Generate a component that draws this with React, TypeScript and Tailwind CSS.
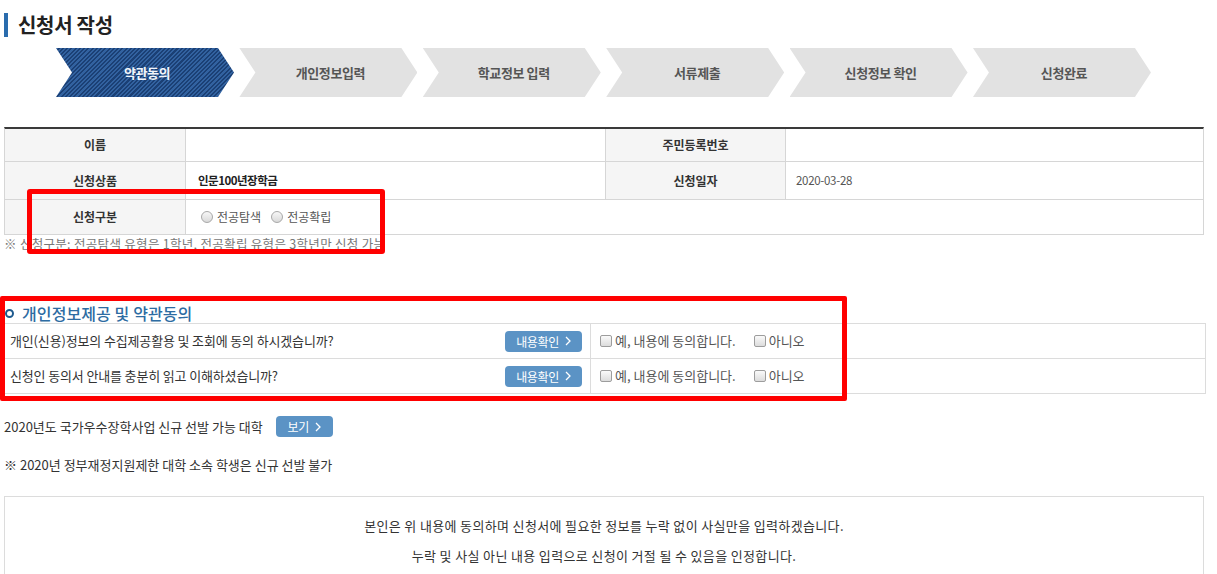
import React from "react";

const steps = ["약관동의", "개인정보입력", "학교정보 입력", "서류제출", "신청정보 확인", "신청완료"];

function Chevron() {
  return (
    <svg width="6" height="10" viewBox="0 0 6 10" className="ml-[6px]">
      <polyline points="1,1 5,5 1,9" fill="none" stroke="#ffffff" strokeWidth="1.3" />
    </svg>
  );
}

function Radio({ label }: { label: string }) {
  return (
    <span className="flex items-center mr-[10px]">
      <span className="w-[12px] h-[12px] rounded-full border border-[#a8a8a8] [background:linear-gradient(#f7f7f7,#d9d9d9)] mr-[4px]" />
      <span className="text-[12px] text-[#555] leading-[16px]">{label}</span>
    </span>
  );
}

function Check({ label, className = "" }: { label: string; className?: string }) {
  return (
    <span className={"flex items-center " + className}>
      <span className="w-[12px] h-[12px] rounded-[2px] border border-[#9d9d9d] [background:linear-gradient(#fafafa,#dcdcdc)] mr-[3px]" />
      <span className="text-[13px] text-[#555] leading-[16px]">{label}</span>
    </span>
  );
}

function BlueButton({ label, w }: { label: string; w: string }) {
  return (
    <span className={"h-[21px] rounded-[4px] bg-[#5b93c5] text-white text-[12px] tracking-[-0.4px] leading-[21px] flex items-center justify-center " + w}>
      {label}
      <Chevron />
    </span>
  );
}

export default function App() {
  const cellB = "border-[#d6d6d6]";
  return (
    <div className="relative w-[1217px] min-h-[574px] bg-white text-[#333] font-['Noto_Sans_CJK_KR','Noto_Sans',sans-serif] overflow-hidden">
      {/* Title */}
      <div className="flex items-center pt-[13px] pl-[4px]">
        <span className="w-[4px] h-[24px] bg-[#2a6cad]" />
        <h1 className="ml-[10px] text-[20px] font-bold leading-[24px] text-[#222] tracking-[-0.3px]">신청서 작성</h1>
      </div>

      {/* Steps */}
      <div className="flex gap-[5.4px] ml-[56px] mt-[11px]">
        {steps.map((s, i) => (
          <div
            key={s}
            className={
              "w-[178px] h-[49px] flex items-center justify-center pl-[4px] text-[13px] font-bold tracking-[-0.4px] [clip-path:polygon(0_0,162px_0,178px_50%,162px_100%,0_100%,16px_50%)] " +
              (i === 0
                ? "text-[#f2f5fa] [background:repeating-linear-gradient(135deg,#3262a0_0px,#3262a0_1.5px,#1b4075_1.5px,#1b4075_3px)]"
                : "bg-[#e2e2e2] text-[#555]")
            }
          >
            {s}
          </div>
        ))}
      </div>

      {/* Info table */}
      <div className={"ml-[4px] mt-[30px] w-[1200px] border-t-2 border-t-[#3a3a3a] border-x " + cellB}>
        <div className={"flex h-[33px] border-b " + cellB}>
          <div className={"w-[181px] bg-[#f5f5f5] border-r flex items-center justify-center text-[12px] font-bold " + cellB}>이름</div>
          <div className={"w-[420px] border-r " + cellB} />
          <div className={"w-[180px] bg-[#f5f5f5] border-r flex items-center justify-center text-[12px] font-bold " + cellB}>주민등록번호</div>
          <div className="flex-1" />
        </div>
        <div className={"flex h-[38px] border-b " + cellB}>
          <div className={"w-[181px] bg-[#f5f5f5] border-r flex items-center justify-center text-[12px] font-bold " + cellB}>신청상품</div>
          <div className={"w-[420px] border-r flex items-center pl-[12px] text-[11.5px] font-bold text-[#222] tracking-[-0.5px] " + cellB}>인문100년장학금</div>
          <div className={"w-[180px] bg-[#f5f5f5] border-r flex items-center justify-center text-[12px] font-bold " + cellB}>신청일자</div>
          <div className="flex-1 flex items-center pl-[10px] text-[11.5px] text-[#555] tracking-[-0.3px]">2020-03-28</div>
        </div>
        <div className={"flex h-[35px] border-b " + cellB}>
          <div className={"w-[181px] bg-[#f5f5f5] border-r flex items-center justify-center text-[12px] font-bold " + cellB}>신청구분</div>
          <div className="flex-1 flex items-center pl-[15px]">
            <Radio label="전공탐색" />
            <Radio label="전공확립" />
          </div>
        </div>
      </div>
      <p className="ml-[4px] mt-[1px] text-[12.5px] tracking-[0.3px] leading-[16px] text-[#777]">※ 신청구분: 전공탐색 유형은 1학년, 전공확립 유형은 3학년만 신청 가능</p>

      {/* Agreement section */}
      <div className="mt-[51px] ml-[5px] flex items-center h-[20px]">
        <span className="w-[9px] h-[9px] rounded-full border-[2.5px] border-[#1e5a8e]" />
        <h2 className="ml-[8px] text-[16px] font-medium leading-[20px] text-[#2d6ca2] tracking-[0.1px]">개인정보제공 및 약관동의</h2>
      </div>
      <div className="ml-[4px] w-[1202px] border-t border-r border-[#dcdcdc]">
        {["개인(신용)정보의 수집제공활용 및 조회에 동의 하시겠습니까?", "신청인 동의서 안내를 충분히 읽고 이해하셨습니까?"].map((q) => (
          <div key={q} className="flex h-[35px] border-b border-[#dcdcdc]">
            <div className="w-[587px] flex items-center justify-between pl-[6px] pr-[8px] border-r border-[#dcdcdc]">
              <span className="text-[13px] tracking-[-0.15px] text-[#333]">{q}</span>
              <BlueButton label="내용확인" w="w-[77px]" />
            </div>
            <div className="flex-1 flex items-center pl-[9px]">
              <Check label="예, 내용에 동의합니다." />
              <Check label="아니오" className="ml-[18px]" />
            </div>
          </div>
        ))}
      </div>

      {/* Extra info */}
      <div className="ml-[4px] mt-[22px] flex items-center h-[21px]">
        <span className="text-[13px] text-[#333] leading-[16px]">2020년도 국가우수장학사업 신규 선발 가능 대학</span>
        <span className="ml-[13px]">
          <BlueButton label="보기" w="w-[57px]" />
        </span>
      </div>
      <p className="ml-[4px] mt-[20px] text-[13px] leading-[16px] text-[#333]">※ 2020년 정부재정지원제한 대학 소속 학생은 신규 선발 불가</p>

      {/* Confirmation box */}
      <div className="ml-[4px] mt-[23px] w-[1200px] h-[120px] border border-[#dcdcdc] pt-[20px] text-center text-[13px] tracking-[0.35px] leading-[18px] text-[#333]">
        <p>본인은 위 내용에 동의하며 신청서에 필요한 정보를 누락 없이 사실만을 입력하겠습니다.</p>
        <p className="mt-[12px]">누락 및 사실 아닌 내용 입력으로 신청이 거절 될 수 있음을 인정합니다.</p>
      </div>

      {/* Red annotation boxes */}
      <div className="absolute left-[27px] top-[189px] w-[358px] h-[65px] border-[5px] border-[#ff0000] rounded-[3px] pointer-events-none" />
      <div className="absolute left-0 top-[296px] w-[847px] h-[105px] border-[5px] border-[#ff0000] rounded-[2px] pointer-events-none" />
    </div>
  );
}
